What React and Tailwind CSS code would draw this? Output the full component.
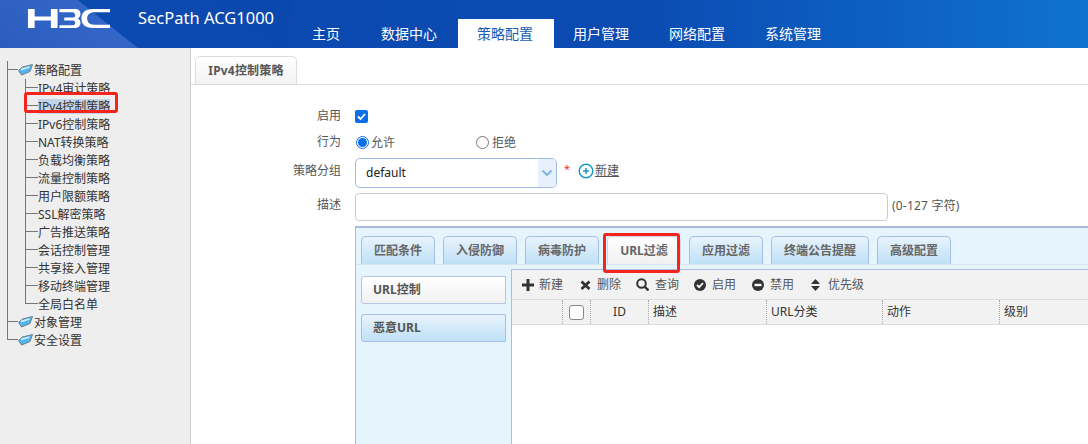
import { ChevronDown } from 'lucide-react'

const font = "font-['Noto_Sans','Noto_Sans_CJK_SC',sans-serif]"

const navItems = ['主页', '数据中心', '策略配置', '用户管理', '网络配置', '系统管理']
const subItems = ['IPv4审计策略', 'IPv4控制策略', 'IPv6控制策略', 'NAT转换策略', '负载均衡策略', '流量控制策略', '用户限额策略', 'SSL解密策略', '广告推送策略', '会话控制管理', '共享接入管理', '移动终端管理', '全局白名单']
const panelTabs = [
  { label: '匹配条件', w: 'w-[74px]' },
  { label: '入侵防御', w: 'w-[74px]' },
  { label: '病毒防护', w: 'w-[74px]' },
  { label: 'URL过滤', w: 'w-[74px]', active: true },
  { label: '应用过滤', w: 'w-[74px]' },
  { label: '终端公告提醒', w: 'w-[98px]' },
  { label: '高级配置', w: 'w-[74px]' },
]
const columns = [
  { w: 'w-[50px]' },
  { w: 'w-[28px]', check: true },
  { w: 'w-[58px]', label: 'ID', center: true },
  { w: 'w-[118px]', label: '描述' },
  { w: 'w-[116px]', label: 'URL分类' },
  { w: 'w-[117px]', label: '动作' },
  { w: 'flex-1', label: '级别' },
]

function Logo() {
  return (
    <svg width="84" height="21" viewBox="0 0 86 22" fill="#fff" className="shrink-0">
      <path d="M0 1h7v8h17V1h7v20h-7v-8H7v8H0z" />
      <path d="M33 1h16c4 0 6 2 6 5 0 2-1 4-3 5 2 .6 3 2.500 3 4.500 0 3.500-2.500 5.500-6 5.500H33v-3h14c1.500 0 2.500-1 2.500-2.500S48.500 13 47 13H38v-3h9c1.500 0 2.500-1 2.500-2.200S48.500 4.500 47 4.500H33z" />
      <path d="M86 1H68C60 1 56 5 56 11s4 10 12 10h18v-3.500H69c-4 0-7-2.500-7-6.500s3-6.500 7-6.500h17z" />
    </svg>
  )
}

function FolderIcon() {
  return (
    <svg width="16" height="12" viewBox="0 0 16 12" className="shrink-0">
      <path d="M.5 6.500 4.500 3l10-2.500-2.500 7-8.500 3.500z" fill="#53b5ee" stroke="#6d7f8c" strokeWidth="1" />
      <path d="M3 5.500l8.500-2.500" stroke="#d3f0ff" strokeWidth="1.500" />
    </svg>
  )
}

// half-height elbow of the tree lines; the lower half is left out on a last row
function Elbow({ last, w }) {
  return (
    <div className={`flex flex-col shrink-0 h-[18px] ${w}`}>
      <div className="h-[9px] border-l border-b border-[#777]" />
      {!last && <div className="h-[9px] border-l border-[#777]" />}
    </div>
  )
}

function TreeRoot({ label, last }) {
  return (
    <div className="flex h-[18px] items-center">
      <Elbow last={last} w="w-[11px]" />
      <FolderIcon />
      <span className="pt-[1px] text-[12px] leading-[18px] text-[#333]">{label}</span>
    </div>
  )
}

function Sidebar() {
  return (
    <aside className="relative w-[191px] shrink-0 border-r border-[#ccc] bg-[#eeeeee] pl-[7px] pt-[13px]">
      <TreeRoot label="策略配置" />
      <div className="flex">
        <div className="w-[18px] shrink-0 border-l border-[#777]" />
        <div>
          {subItems.map((item, i) => (
            <div key={item} className="flex h-[18px] items-center">
              <Elbow last={i === subItems.length - 1} w="w-[13px]" />
              <span className={`text-[12px] leading-[15px] text-[#333] ${i === 1 ? 'bg-[#c3d4ea]' : ''}`}>{item}</span>
            </div>
          ))}
        </div>
      </div>
      <TreeRoot label="对象管理" />
      <TreeRoot label="安全设置" last />
      <div className="absolute left-[24px] top-[44px] h-[21px] w-[94px] rounded-[3px] border-[3px] border-[#f5241c]" />
    </aside>
  )
}

function FormRow({ label, labelClass = '', className, children }) {
  return (
    <div className={`flex items-center ${className}`}>
      <span className={`w-[150px] shrink-0 text-right text-[12px] text-[#555] ${labelClass}`}>{label}</span>
      <div className="ml-[14px] flex items-center">{children}</div>
    </div>
  )
}

function ToolButton({ icon, label, className }) {
  return (
    <div className={`flex items-center ${className}`}>
      {icon}
      <span className="text-[12px] text-[#555]">{label}</span>
    </div>
  )
}

function Toolbar() {
  return (
    <div className="flex h-[30px] items-center border-b border-[#ddd] bg-[#f2f2f2] pl-[10px]">
      <ToolButton className="w-[58px] gap-[5px]" label="新建" icon={
        <svg width="12" height="12" viewBox="0 0 12 12" fill="#333"><path d="M4.500 0h3v4.500H12v3H7.500V12h-3V7.500H0v-3h4.500z" /></svg>
      } />
      <ToolButton className="w-[56px] gap-[6px]" label="删除" icon={
        <svg width="11" height="12" viewBox="0 0 11 12"><path d="M1.500 2.500l8 7.500M9.500 2.500l-8 7.500" stroke="#333" strokeWidth="2.800" /></svg>
      } />
      <ToolButton className="w-[58px] gap-[6px]" label="查询" icon={
        <svg width="13" height="13" viewBox="0 0 13 13" fill="none" stroke="#333" strokeWidth="2"><circle cx="5.500" cy="5.500" r="4.300" /><path d="M8.500 8.500 12.500 12.500" strokeWidth="2.400" /></svg>
      } />
      <ToolButton className="w-[58px] gap-[6px]" label="启用" icon={
        <svg width="12" height="12" viewBox="0 0 12 12"><circle cx="6" cy="6" r="6" fill="#333" /><path d="M3 6l2.200 2.200L9 4" stroke="#fff" strokeWidth="1.800" fill="none" /></svg>
      } />
      <ToolButton className="w-[59px] gap-[6px]" label="禁用" icon={
        <svg width="12" height="12" viewBox="0 0 12 12"><circle cx="6" cy="6" r="6" fill="#333" /><path d="M2.500 4.800h7v2.400h-7z" fill="#fff" /></svg>
      } />
      <ToolButton className="gap-[8px]" label="优先级" icon={
        <svg width="9" height="12" viewBox="0 0 9 12" fill="#333"><path d="M4.500 0 9 5H0zM0 7h9l-4.500 5z" /></svg>
      } />
    </div>
  )
}

function RuleTable() {
  return (
    <div className="flex-1 border-l border-t border-[#a4bfe2] bg-white">
      <Toolbar />
      <div className="flex h-[25px] border-b border-[#ddd] bg-[#f2f2f2]">
        {columns.map((col, i) => (
          <div key={i} className={`flex items-center ${col.w} ${i > 0 ? 'border-l border-dotted border-[#aaa]' : ''} ${col.center ? 'justify-center' : 'pl-[4px]'}`}>
            {col.check && <span className="ml-[2px] size-[15px] rounded-[3px] border border-[#888] bg-white" />}
            {col.label && <span className="text-[12px] text-[#333]">{col.label}</span>}
          </div>
        ))}
      </div>
    </div>
  )
}

function FilterPanel() {
  return (
    <div className="relative ml-[164px] mt-[5px] flex-1 border-l border-t-2 border-[#a9bcd9] bg-[#e6f4fd]">
      <div className="flex h-[37px] items-end gap-[8px] border-b border-[#d9e3ee] pl-[5px]">
        {panelTabs.map((tab) => (
          <div key={tab.label} className={`flex h-[28px] items-center justify-center rounded-t-[5px] border border-b-0 text-[12px] font-bold text-[#666] ${tab.w} ${tab.active ? 'border-[#d5d5d5] bg-gradient-to-b from-white to-[#f1f1f1]' : 'border-[#a3c0e8] bg-gradient-to-b from-[#e8f3fc] to-[#bfe0f6]'}`}>
            {tab.label}
          </div>
        ))}
      </div>
      <div className="flex h-[180px]">
        <div className="flex w-[155px] shrink-0 flex-col gap-[10px] pl-[5px] pr-[5px] pt-[11px]">
          <div className="flex h-[28px] items-center rounded-l-[3px] border border-[#b5c6de] bg-gradient-to-b from-white to-[#f1f1f1] pl-[11px] text-[12px] font-bold text-[#555]">URL控制</div>
          <div className="flex h-[28px] items-center rounded-l-[3px] border border-[#a3c0e8] bg-gradient-to-b from-[#e8f3fc] to-[#bfe0f6] pl-[11px] text-[12px] font-bold text-[#555]">恶意URL</div>
        </div>
        <div className="mt-[4px] flex flex-1 flex-col">
          <RuleTable />
        </div>
      </div>
      <div className="absolute left-[247px] top-[5px] h-[40px] w-[77px] rounded-[3px] border-[3px] border-[#f5241c]" />
    </div>
  )
}

export default function App() {
  return (
    <div className={`flex h-[444px] w-[1088px] flex-col overflow-hidden bg-white ${font}`}>
      <header className="flex h-[48px] shrink-0 bg-[linear-gradient(90deg,#0b47ad_0%,#0b4cb3_60%,#0f72cf_100%)]">
        <div className="flex w-[292px] shrink-0 items-start bg-[linear-gradient(38.7deg,#2a5dbd_0%,#3366c6_39%,#0b4ab0_39.3%,#0b48ae_100%)] pl-[27px] pt-[8px]">
          <Logo />
          <span className="ml-[27px] mt-[-1px] whitespace-nowrap text-[16.5px] leading-[22px] text-white">SecPath ACG1000</span>
        </div>
        <nav className="flex items-end">
          {navItems.map((item, i) => (
            <div key={item} className={`flex h-[29px] items-center justify-center pr-[2px] text-[14px] ${i === 0 ? 'w-[70px]' : 'w-[96px]'} ${i === 2 ? 'bg-white text-[#1a5cb8]' : 'text-white'}`}>
              {item}
            </div>
          ))}
        </nav>
      </header>
      <div className="flex flex-1">
        <Sidebar />
        <main className="flex min-w-0 flex-1 flex-col">
          <div className="flex h-[37px] items-end border-b border-[#ddd] pl-[4px]">
            <div className="flex h-[28px] w-[102px] items-center justify-center rounded-t-[5px] border border-b-0 border-[#ddd] bg-gradient-to-b from-white to-[#f3f3f3] text-[12px] font-bold tracking-[0.2px] text-[#555]">IPv4控制策略</div>
          </div>
          <FormRow label="启用" className="mt-[24px] h-[14px]">
            <span className="flex size-[13px] items-center justify-center rounded-[2px] bg-[#0b6fe8]">
              <svg width="9" height="9" viewBox="0 0 9 9" fill="none" stroke="#fff" strokeWidth="1.800"><path d="M1 4.500 3.500 7 8 2" /></svg>
            </span>
          </FormRow>
          <FormRow label="行为" className="mt-[11px] h-[16px]">
            <span className="ml-[1px] flex size-[13px] items-center justify-center rounded-full border border-[#0b6fe8]"><span className="size-[9px] rounded-full bg-[#0b6fe8]" /></span>
            <span className="ml-[2px] mt-[2px] w-[105px] text-[12px] text-[#555]">允许</span>
            <span className="size-[13px] rounded-full border border-[#777]" />
            <span className="ml-[3px] mt-[2px] text-[12px] text-[#555]">拒绝</span>
          </FormRow>
          <FormRow label="策略分组" labelClass="pb-[5px]" className="mt-[8px] h-[30px]">
            <div className="flex h-[30px] w-[202px] items-center justify-between overflow-hidden rounded-[5px] border border-[#9dbbe6] bg-white pl-[10px] text-[12px] text-[#222]">
              <span>default</span>
              <span className="flex h-full w-[18px] items-center justify-center bg-[#e8f1fb]"><ChevronDown size={16} strokeWidth={3} color="#7ab8e8" /></span>
            </div>
            <span className="mb-[8px] ml-[7px] text-[11px] text-[#e33]">*</span>
            <svg width="16" height="16" viewBox="0 0 16 16" fill="none" className="mb-[5px] ml-[8px]"><circle cx="8" cy="8" r="6.800" stroke="#1b9ac4" strokeWidth="1.500" /><path d="M5 8h6M8 5v6" stroke="#1b9ac4" strokeWidth="1.500" /></svg>
            <span className="mb-[5px] ml-[1px] text-[12px] text-[#555] underline">新建</span>
          </FormRow>
          <FormRow label="描述" labelClass="pb-[4px]" className="mt-[5px] h-[28px]">
            <div className="h-[28px] w-[533px] rounded-[4px] border border-[#ccc] bg-white" />
            <span className="ml-[4px] pb-[3px] text-[12px] tracking-[0.2px] text-[#555]">(0-127 字符)</span>
          </FormRow>
          <FilterPanel />
        </main>
      </div>
    </div>
  )
}
